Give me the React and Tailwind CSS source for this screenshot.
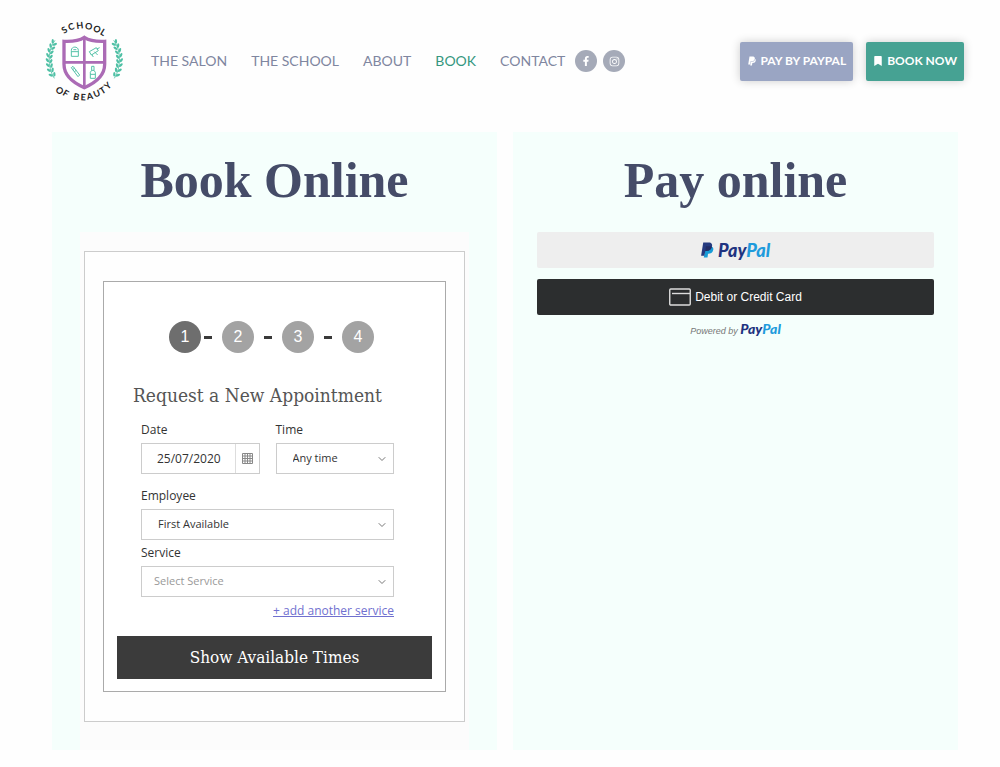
import React from 'react';
import { FaBookmark, FaFacebookF, FaInstagram, FaPaypal } from 'react-icons/fa';
import { LuChevronDown } from 'react-icons/lu';

const links = ['The Salon', 'The School', 'About', 'Book', 'Contact'];
const times = ['Any time', 'Morning', 'Afternoon', 'Evening'];
const steps = [1, 2, 3, 4];

// Letters of the badge, placed around its centre. Angles are in degrees.
function RingText({ text, angles, radius, bottom }) {
  const dir = bottom ? -1 : 1;
  const rad = angles.map((a) => (a * Math.PI) / 180);
  return (
    <text
      x={rad.map((a) => (148 + radius * Math.sin(a)).toFixed(1)).join(' ')}
      y={rad.map((a) => (152 - dir * radius * Math.cos(a)).toFixed(1)).join(' ')}
      rotate={angles.map((a) => a * dir).join(' ')}
      textAnchor="middle"
      className="fill-[#222] font-['Lato',sans-serif] text-[27px] font-bold"
    >
      {text}
    </text>
  );
}

const leaves = [
  [58, 94, 35],
  [52, 106, 25],
  [47, 119, 15],
  [44, 133, 5],
  [43, 147, -5],
  [44, 161, -15],
  [47, 175, -25],
  [52, 189, -35]
];

function Laurel() {
  return (
    <g fill="#4fc0a5">
      <path
        d="M60 88 C38 115 36 168 58 202"
        fill="none"
        stroke="#4fc0a5"
        strokeWidth="2.5"
      />
      {leaves.map(([x, y, turn]) => (
        <g key={y} transform={`translate(${x} ${y}) rotate(${turn})`}>
          <ellipse cx="-5" cy="-3" rx="3.5" ry="7" transform="rotate(-32)" />
          <ellipse cx="6" cy="1" rx="3.5" ry="7" transform="rotate(32)" />
        </g>
      ))}
    </g>
  );
}

function Logo() {
  return (
    <a href="#" aria-label="School of Beauty" className="shrink-0">
      <svg viewBox="24 24 252 252" className="size-21">
        <RingText text="SCHOOL" angles={[-33, -21, -7, 7, 21, 32]} radius={99} />
        <RingText
          text="OF BEAUTY"
          angles={[-42, -31, -22, -13, -2, 9, 21, 32, 43]}
          radius={116}
          bottom
        />
        <Laurel />
        <g transform="translate(296 0) scale(-1 1)">
          <Laurel />
        </g>
        <path
          d="M148 79 C130 91 108 92 87 91 V160 C87 195 115 216 148 230 C181 216 209 195 209 160 V91 C188 92 166 91 148 79 Z"
          fill="white"
          stroke="#ab6bb5"
          strokeWidth="10"
        />
        <path d="M148 80 V228 M88 154 H208" stroke="#ab6bb5" strokeWidth="8" />
        <g fill="none" stroke="#55c2a8" strokeWidth="3">
          <path d="M109 136 V118 C109 105 130 105 130 118 V136 Z M109 122 H130 M115 116 H124" />
          <path d="M163 122 L184 110 L190 119 L169 132 Z M170 130 L175 138 M185 114 L194 110 M178 122 L188 132" />
          <path d="M109 170 L114 166 L134 192 L129 197 Z M113 176 L119 171 M118 182 L124 178" />
          <path d="M166 202 V184 L170 178 H177 L181 184 V202 Z M170 178 V166 H177 V178 M166 190 H181" />
        </g>
      </svg>
    </a>
  );
}

function Header() {
  return (
    <header className="flex items-center pt-[19px] pr-9 pl-[43px] font-['Lato',sans-serif]">
      <Logo />
      <nav className="ml-6 flex items-center gap-6 text-sm text-[#7f86a0]">
        {links.map((link) => (
          <a
            key={link}
            href="#"
            className={
              link === 'Book' ? 'text-[#35977f] uppercase' : 'uppercase'
            }
          >
            {link}
          </a>
        ))}
      </nav>
      <div className="ml-2.5 flex gap-1.5 text-white">
        <a
          href="#"
          aria-label="Facebook"
          className="flex size-[22px] items-center justify-center rounded-full bg-[#a5aab8]"
        >
          <FaFacebookF size={10} />
        </a>
        <a
          href="#"
          aria-label="Instagram"
          className="flex size-[22px] items-center justify-center rounded-full bg-[#a5aab8]"
        >
          <FaInstagram size={11} />
        </a>
      </div>
      <div className="ml-auto flex gap-[13px] text-xs font-bold text-white">
        <a
          href="#"
          className="flex h-[39px] items-center gap-1 rounded-xs bg-[#9aa5c3] px-[7px] uppercase shadow-[0_0_10px_rgba(0,0,0,0.2)]"
        >
          <FaPaypal size={10} />
          Pay by PayPal
        </a>
        <a
          href="#"
          className="flex h-[39px] items-center gap-1 rounded-xs bg-[#46a293] px-[7px] uppercase shadow-[0_0_10px_rgba(0,0,0,0.2)]"
        >
          <FaBookmark size={10} />
          Book now
        </a>
      </div>
    </header>
  );
}

function Steps() {
  return (
    <ol className="flex justify-center pr-1.5 font-['Liberation_Sans',sans-serif] text-base text-white">
      {steps.map((step) => (
        <li key={step} className="flex items-center">
          {step > 1 && (
            <span
              className={
                step === 2
                  ? 'mr-2.5 ml-[3px] h-[3px] w-2 bg-[#3a3a3a]'
                  : 'mx-2.5 h-[3px] w-2 bg-[#3a3a3a]'
              }
            />
          )}
          <span
            className={
              step === 1
                ? 'flex size-8 items-center justify-center rounded-full bg-[#6e6e6e]'
                : 'flex size-8 items-center justify-center rounded-full bg-[#a3a3a3]'
            }
          >
            {step}
          </span>
        </li>
      ))}
    </ol>
  );
}

function Select({ id, label, options, placeholder }) {
  return (
    <div>
      <label htmlFor={id} className="block text-xs leading-5 text-[#333]">
        {label}
      </label>
      <div className="relative mt-[3px]">
        <select
          id={id}
          className={
            placeholder
              ? 'h-[31px] w-full appearance-none border border-[#ccc] bg-white px-3 text-[11px] text-[#999]'
              : 'h-[31px] w-full appearance-none border border-[#ccc] bg-white px-4 text-[11px] text-[#333]'
          }
        >
          {options.map((option) => (
            <option key={option}>{option}</option>
          ))}
        </select>
        <LuChevronDown
          size={12}
          className="pointer-events-none absolute top-2.5 right-1.5 text-[#777]"
        />
      </div>
    </div>
  );
}

function CalendarIcon() {
  return (
    <svg viewBox="0 0 11 11" className="size-[11px]" stroke="#888" fill="none">
      <path d="M0.5 0.5 H10.5 V10.5 H0.5 Z M0.5 3 H10.5 M0.5 5.5 H10.5 M0.5 8 H10.5 M3 0.5 V10.5 M5.5 0.5 V10.5 M8 0.5 V10.5" />
    </svg>
  );
}

function BookingForm() {
  return (
    <form
      className="border border-[#aaa] bg-white px-[13px] pt-[39px] pb-3 font-['Open_Sans',sans-serif]"
      onSubmit={(e) => e.preventDefault()}
    >
      <Steps />
      <h2 className="mt-[26px] ml-4 font-['DejaVu_Serif_Condensed','Liberation_Serif',serif] text-[19px] leading-8 text-[#555]">
        Request a New Appointment
      </h2>
      <div className="mt-[9px] mr-[38px] ml-6">
        <div className="grid grid-cols-2 gap-4">
          <div>
            <label htmlFor="date" className="block text-xs leading-5 text-[#333]">
              Date
            </label>
            <div className="mt-[3px] flex h-[31px] border border-[#ccc]">
              <input
                id="date"
                type="text"
                defaultValue="25/07/2020"
                className="w-full min-w-0 flex-1 pl-[15px] text-xs text-[#333]"
              />
              <button
                type="button"
                aria-label="Choose date"
                className="flex w-6 items-center justify-center border-l border-[#ddd]"
              >
                <CalendarIcon />
              </button>
            </div>
          </div>
          <Select id="time" label="Time" options={times} />
        </div>
        <div className="mt-3">
          <Select id="employee" label="Employee" options={['First Available']} />
        </div>
        <div className="mt-[3px]">
          <Select
            id="service"
            label="Service"
            options={['Select Service']}
            placeholder
          />
        </div>
        <div className="mt-1 text-right">
          <a href="#" className="block text-xs leading-5 text-[#7070cf] underline">
            + add another service
          </a>
        </div>
      </div>
      <button
        type="submit"
        className="mt-[15px] h-[43px] w-full bg-[#3b3b3b] font-['DejaVu_Serif_Condensed','Liberation_Serif',serif] text-[17px] text-white"
      >
        Show Available Times
      </button>
    </form>
  );
}

function PayPalWord() {
  return (
    <span className="font-['Lato',sans-serif] font-black text-[#1f3380] italic">
      Pay<span className="text-[#1f9bdc]">Pal</span>
    </span>
  );
}

function PayPalMark() {
  return (
    <svg viewBox="0 0 24 30" className="h-4 w-[13px]">
      <path
        d="M9 8 H18 C23 9 24 13 22 17 C20 22 16 22 13 22 L12 29 H5 Z"
        fill="#179bd7"
      />
      <path
        d="M4 1 H14 C20 1 22 5 20 10 C18 16 13 17 8 17 L6 26 H0 Z"
        fill="#253b80"
      />
      <path d="M9 8 H18 Q20 9 20 10 C18 16 13 17 8 17 Z" fill="#222d65" />
    </svg>
  );
}

function CardIcon() {
  return (
    <svg viewBox="0 0 22 18" className="h-[18px] w-[22px]" fill="none" stroke="#ddd">
      <rect x="0.75" y="1" width="20.5" height="16" rx="1" strokeWidth="1.4" />
      <path d="M3 5.5 H21" strokeWidth="1.4" />
    </svg>
  );
}

function PayOnline() {
  return (
    <section className="bg-[#f5fffc] px-6 pt-5">
      <h1 className="text-center font-['Liberation_Serif',serif] text-[50px] leading-14 font-bold text-[#454c68]">
        Pay online
      </h1>
      <button
        type="button"
        aria-label="PayPal"
        className="mt-6 flex h-9 w-full items-center justify-center gap-1 rounded-xs bg-[#eee] text-lg"
      >
        <PayPalMark />
        <PayPalWord />
      </button>
      <button
        type="button"
        className="mt-[11px] flex h-9 w-full items-center justify-center gap-1 rounded-xs bg-[#2c2e2f] font-['Liberation_Sans',sans-serif] text-xs text-white"
      >
        <CardIcon />
        Debit or Credit Card
      </button>
      <p className="mt-1.5 text-center font-['Liberation_Sans',sans-serif] text-[9px] leading-4 text-[#777]">
        <em>Powered by</em>{' '}
        <span className="text-sm leading-4">
          <PayPalWord />
        </span>
      </p>
    </section>
  );
}

export default function App() {
  return (
    <div className="bg-[#fefefe] pb-[18px]">
      <Header />
      <main className="mt-[29px] mr-[42px] ml-[52px] grid grid-cols-2 gap-4">
        <section className="bg-[#f5fffc] px-7 pt-5">
          <h1 className="text-center font-['Liberation_Serif',serif] text-[50px] leading-14 font-bold text-[#454c68]">
            Book Online
          </h1>
          <div className="mt-6 bg-[#fcfcfc] px-1 pt-[19px] pb-7">
            <div className="border border-[#ccc] bg-[#fefefe] px-[18px] py-[29px]">
              <BookingForm />
            </div>
          </div>
        </section>
        <PayOnline />
      </main>
    </div>
  );
}
